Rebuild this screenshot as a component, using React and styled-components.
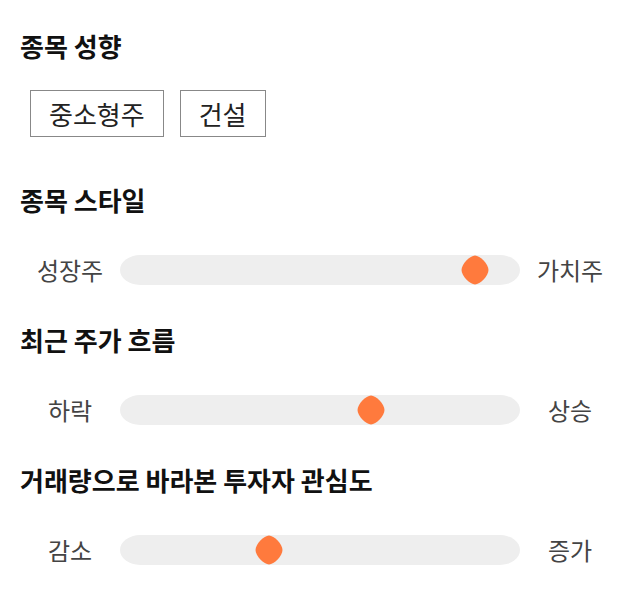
import React from "react";
import styled, { createGlobalStyle } from "styled-components";

const GlobalStyle = createGlobalStyle`
    body {
        margin: 0;
        background: #fff;
        font-family: "Noto Sans CJK KR", "Noto Sans", sans-serif;
    }
`;

const Page = styled.div`
    width: 640px;
    padding: 30px 20px 0;
    box-sizing: border-box;
`;

const Section = styled.section`
    margin-bottom: ${(p) => p.$gap || 40}px;
`;

const Heading = styled.h2`
    margin: 0;
    font-size: 26px;
    line-height: 32px;
    font-weight: 700;
    color: #111;
`;

const Chips = styled.div`
    display: flex;
    gap: 16px;
    margin: 28px 0 0 10px;
`;

const Chip = styled.span`
    display: flex;
    align-items: center;
    height: 47px;
    padding: 0 18px;
    box-sizing: border-box;
    border: 1px solid #888;
    font-size: 26px;
    color: #222;
`;

const SliderRow = styled.div`
    display: grid;
    grid-template-columns: 100px 1fr 100px;
    align-items: center;
    margin-top: 39px;
`;

const Label = styled.span`
    text-align: center;
    font-size: 24px;
    line-height: 30px;
    color: #444;
`;

const Track = styled.div`
    position: relative;
    height: 30px;
    background: #eeeeee;
    border-radius: 20px / 15px;
`;

const Thumb = styled.svg`
    position: absolute;
    top: 0;
    width: 28px;
    height: 30px;
    margin-left: -14px;
`;

const sliders = [
    { title: "종목 스타일", left: "성장주", right: "가치주", value: 0.917 },
    { title: "최근 주가 흐름", left: "하락", right: "상승", value: 0.637 },
    { title: "거래량으로 바라본 투자자 관심도", left: "감소", right: "증가", value: 0.363 },
];

const Slider = ({ left, right, value }) => (
    <SliderRow>
        <Label>{left}</Label>
        <Track>
            <Thumb
                viewBox="0 0 28 30"
                style={{ left: `calc(14px + ${value} * (100% - 28px))` }}
            >
                <path
                    d="M14 0.5 C19 0.5 27.5 9 27.5 15 C27.5 21 19 29.5 14 29.5 C9 29.5 0.5 21 0.5 15 C0.5 9 9 0.5 14 0.5 Z"
                    fill="#ff7a3d"
                />
            </Thumb>
        </Track>
        <Label>{right}</Label>
    </SliderRow>
);

const App = () => (
    <>
        <GlobalStyle />
        <Page>
            <Section $gap={47}>
                <Heading>종목 성향</Heading>
                <Chips>
                    <Chip>중소형주</Chip>
                    <Chip>건설</Chip>
                </Chips>
            </Section>
            {sliders.map((s) => (
                <Section key={s.title} $gap={39}>
                    <Heading>{s.title}</Heading>
                    <Slider left={s.left} right={s.right} value={s.value} />
                </Section>
            ))}
        </Page>
    </>
);

export default App;
